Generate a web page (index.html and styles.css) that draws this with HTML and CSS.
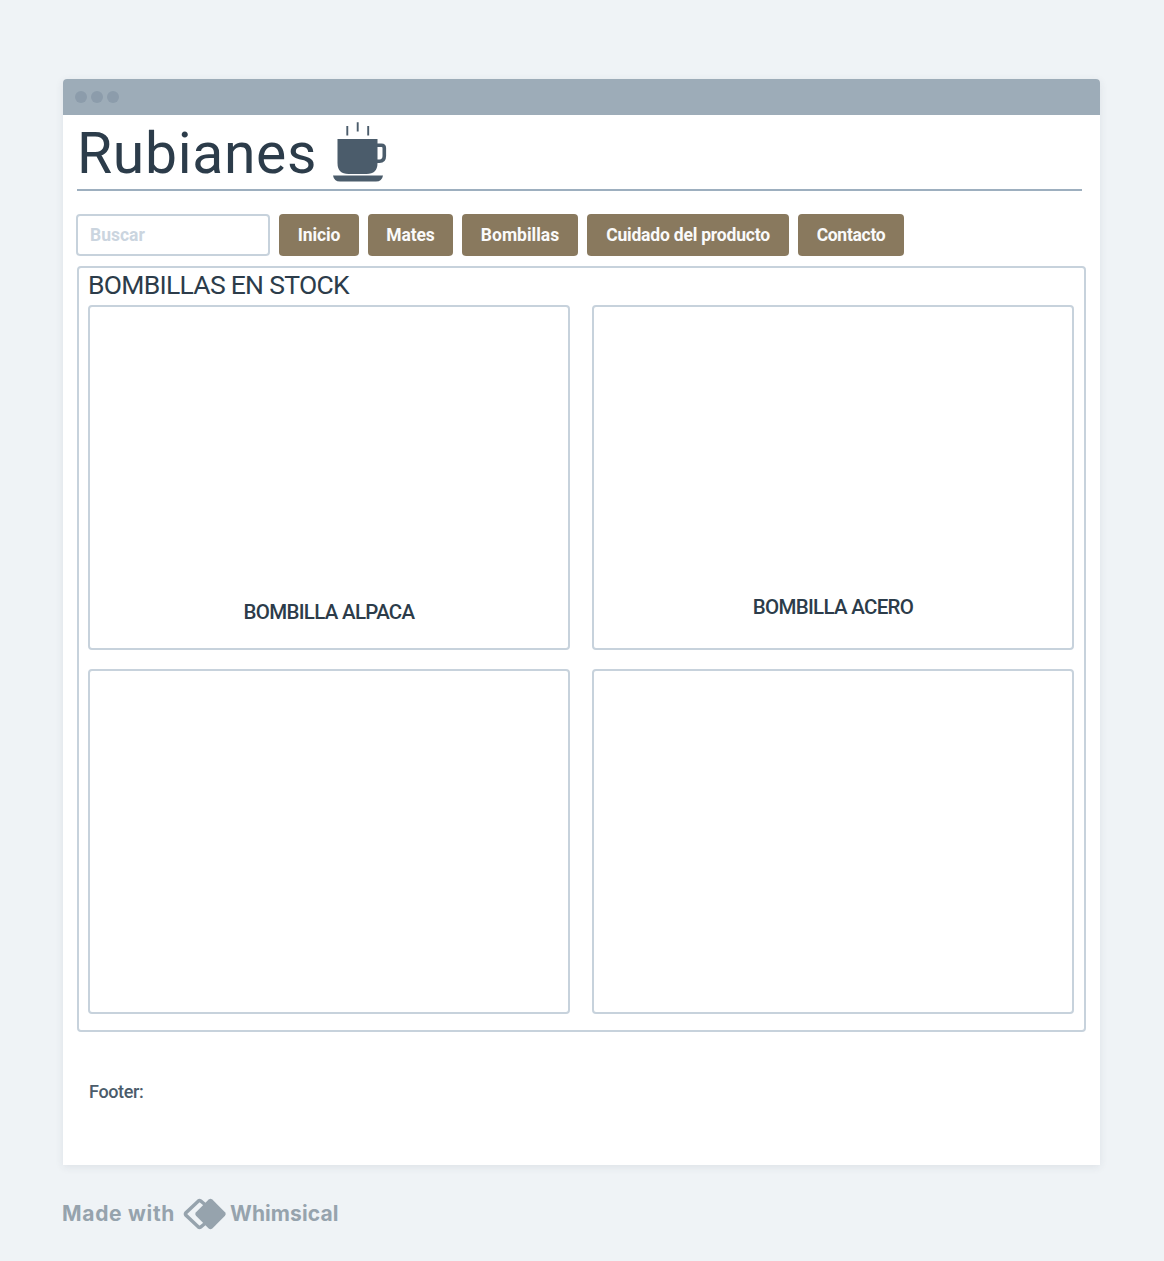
FILE: index.html
```html
<!DOCTYPE html>
<html lang="es">
<head>
<meta charset="utf-8">
<title>Rubianes</title>
<link rel="stylesheet" href="styles.css">
</head>
<body>
<div class="window">
  <div class="titlebar"><span class="dot"></span><span class="dot"></span><span class="dot"></span></div>
  <header class="header">
    <h1 class="brand">Rubianes</h1>
    <svg class="cup" width="54" height="60" viewBox="0 0 54 60">
      <path class="cup-fill" d="M4.500 17H44.500V41Q44.500 52 33.500 52H15.500Q4.500 52 4.500 41ZM0 53.500H50Q49 59.500 43 59.500H7Q1 59.500 0 53.500Z"/>
      <path class="cup-line" stroke-width="3.600" d="M44 23.300H48.500Q51.300 23.300 51.300 26V34Q51.300 39.200 46.500 39.200H43"/>
      <path class="cup-line" stroke-width="1.900" d="M14.300 4V13.500M24.700 .3V9.500M35.200 4V13.500"/>
    </svg>
  </header>
  <nav class="nav">
    <div class="search">Buscar</div>
    <a class="btn inicio">Inicio</a>
    <a class="btn mates">Mates</a>
    <a class="btn bombillas">Bombillas</a>
    <a class="btn cuidado">Cuidado del producto</a>
    <a class="btn contacto">Contacto</a>
  </nav>
  <main class="panel">
    <h2 class="heading"><span>BOMBILLAS EN STOCK</span></h2>
    <div class="grid">
      <div class="card"><span class="label alpaca">BOMBILLA ALPACA</span></div>
      <div class="card"><span class="label acero">BOMBILLA ACERO</span></div>
      <div class="card"></div>
      <div class="card"></div>
    </div>
  </main>
  <footer class="footer">Footer:</footer>
</div>
<div class="credit">
  <span class="made">Made with</span>
  <svg class="logo" width="44" height="32" viewBox="0 0 44 32">
    <path class="logo-line" d="M22 6.500L17.600 3Q16.500 2.200 15.400 3L3 14.600Q1.900 16 3 17.400L15.400 29Q16.500 29.800 17.600 29L22 25.500"/>
    <path class="logo-fill" d="M25.700 1.600Q27.500 0 29.300 1.600L42 14.200Q43.600 16 42 17.800L29.300 30.400Q27.500 32 25.700 30.400L13 17.800Q11.400 16 13 14.200Z"/>
  </svg>
  <span class="whimsical">Whimsical</span>
</div>
</body>
</html>
```
FILE: styles.css
```css
* { box-sizing: border-box; }
body {
  margin: 0;
  padding: 79px 64px 0 63px;
  height: 1261px;
  background: #eff3f6;
  font-family: Roboto, "Liberation Sans", sans-serif;
  color: #2c3c4a;
}
.window {
  height: 1086.400px;
  background: #fff;
  border-radius: 4px 4px 0 0;
  box-shadow: 0 2px 8px rgba(44, 60, 74, .09);
}
.titlebar {
  height: 36px;
  padding-left: 12px;
  display: flex;
  align-items: center;
  gap: 4px;
  background: #9dacb8;
  border-radius: 4px 4px 0 0;
}
.dot { width: 12px; height: 12px; border-radius: 50%; background: #8c9cab; }
.header {
  display: flex;
  height: 76px;
  margin: 0 18px 0 14px;
  border-bottom: 2px solid #9dafbf;
}
.brand {
  margin: 0;
  width: 256px;
  font-size: 57px;
  line-height: 77px;
  font-weight: 400;
  letter-spacing: .700px;
  white-space: nowrap;
}
.cup { margin-top: 7px; }
.cup-fill { fill: #4b5c6b; }
.cup-line { fill: none; stroke: #4b5c6b; }
.nav {
  display: flex;
  gap: 9px;
  margin: 23px 0 0 13px;
  height: 42px;
  font-size: 17.500px;
  line-height: 43px;
  font-weight: 700;
  letter-spacing: -.150px;
  white-space: nowrap;
}
.search {
  width: 194px;
  padding-left: 12px;
  border: 2px solid #c7d2dc;
  border-radius: 4px;
  line-height: 39px;
  letter-spacing: 0;
  color: #cbd5df;
}
.btn { background: #89795e; color: #fafafa; border-radius: 4px; text-align: center; }
.inicio { width: 80px; }
.mates { width: 85px; }
.bombillas { width: 116px; letter-spacing: 0; }
.cuidado { width: 202px; letter-spacing: -.200px; }
.contacto { width: 106px; letter-spacing: -.300px; }
.panel {
  width: 1009px;
  height: 766px;
  margin: 10px 0 0 14px;
  padding: 0 10px 0 9px;
  border: 2px solid #c7d2dc;
  border-radius: 4px;
}
.heading {
  margin: 0;
  height: 37px;
  font-size: 26.500px;
  line-height: 34px;
  font-weight: 400;
  letter-spacing: -.720px;
}
.grid {
  display: grid;
  grid-template-columns: 482px 482px;
  grid-template-rows: 345px 345px;
  gap: 19px 22px;
}
.card {
  display: flex;
  justify-content: center;
  align-items: flex-end;
  border: 2px solid #c7d2dc;
  border-radius: 4px;
}
.label { font-size: 20.500px; line-height: 24px; font-weight: 500; letter-spacing: -.700px; }
.alpaca { margin-bottom: 24px; }
.acero { margin-bottom: 29px; }
.footer {
  margin: 48px 0 0 26px;
  font-size: 18px;
  line-height: 24px;
  font-weight: 500;
  letter-spacing: -.350px;
  color: #4b5c6b;
}
.credit {
  display: flex;
  align-items: center;
  height: 32px;
  margin-top: 33px;
  font: 700 21px/32px Inter, sans-serif;
  color: #96a3ad;
}
.made { width: 121px; margin-left: -1px; letter-spacing: .700px; white-space: nowrap; }
.logo-fill { fill: #96a3ad; }
.logo-line { fill: none; stroke: #96a3ad; stroke-width: 3.500; }
.whimsical { margin-left: 3px; letter-spacing: .100px; }
```
